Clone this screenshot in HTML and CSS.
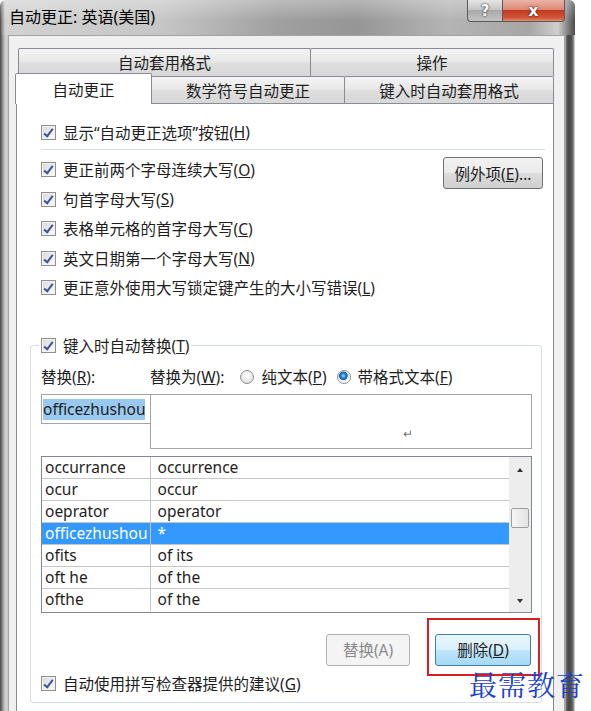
FILE: index.html
```html
<!DOCTYPE html>
<html lang="zh-CN">
<head>
    <meta charset="UTF-8">
    <meta name="viewport" content="width=device-width, initial-scale=1.0">
    <title>自动更正: 英语(美国)</title>
    <link rel="stylesheet" href="styles.css">
</head>
<body>
    <div class="window">
        <div class="titlebar">
            <span class="title">自动更正: 英语(美国)</span>
            <div class="caption">
                <span class="cap help">?</span>
                <span class="cap close">x</span>
            </div>
        </div>
        <div class="frame">
            <div class="client">
                <div class="tab-row back">
                    <div class="tab wide">自动套用格式</div>
                    <div class="tab grow">操作</div>
                </div>
                <div class="tab-row front">
                    <div class="tab active">自动更正</div>
                    <div class="tab math">数学符号自动更正</div>
                    <div class="tab grow">键入时自动套用格式</div>
                </div>
                <div class="panel">
                    <div class="top">
                        <label class="check first"><span class="cb"></span>显示“自动更正选项”按钮(<u>H</u>)</label>
                        <div class="sep"></div>
                        <div class="options">
                            <div class="opt-list">
                                <label class="check"><span class="cb"></span>更正前两个字母连续大写(<u>O</u>)</label>
                                <label class="check"><span class="cb"></span>句首字母大写(<u>S</u>)</label>
                                <label class="check"><span class="cb"></span>表格单元格的首字母大写(<u>C</u>)</label>
                                <label class="check"><span class="cb"></span>英文日期第一个字母大写(<u>N</u>)</label>
                                <label class="check"><span class="cb"></span>更正意外使用大写锁定键产生的大小写错误(<u>L</u>)</label>
                            </div>
                            <button class="btn exc">例外项(<u>E</u>)...</button>
                        </div>
                    </div>

                    <fieldset class="group">
                        <legend><label class="check"><span class="cb"></span>键入时自动替换(<u>T</u>)</label></legend>
                        <div class="labels">
                            <span class="lbl-rep">替换(<u>R</u>):</span>
                            <span>替换为(<u>W</u>):</span>
                            <span class="radio"></span><span>纯文本(<u>P</u>)</span>
                            <span class="radio on"></span><span>带格式文本(<u>F</u>)</span>
                        </div>
                        <div class="fields">
                            <div class="field rep"><span class="sel">officezhushou</span></div>
                            <div class="field with"><span class="para">↵</span></div>
                        </div>
                        <div class="list">
                            <table>
                                <tr><td>occurrance</td><td>occurrence</td></tr>
                                <tr><td>ocur</td><td>occur</td></tr>
                                <tr><td>oeprator</td><td>operator</td></tr>
                                <tr class="selected"><td>officezhushou</td><td>*</td></tr>
                                <tr><td>ofits</td><td>of its</td></tr>
                                <tr><td>oft he</td><td>of the</td></tr>
                                <tr><td>ofthe</td><td>of the</td></tr>
                            </table>
                            <div class="scrollbar">
                                <span class="arrow up"></span>
                                <span class="thumb"></span>
                                <span class="arrow down"></span>
                            </div>
                        </div>
                        <div class="actions">
                            <button class="btn replace" disabled>替换(A)</button>
                            <button class="btn hot delete">删除(<u>D</u>)</button>
                        </div>
                        <label class="check last"><span class="cb"></span>自动使用拼写检查器提供的建议(<u>G</u>)</label>
                    </fieldset>
                </div>
            </div>
        </div>
    </div>
    <div class="mark"></div>
    <div class="watermark">最需教育</div>
</body>
</html>
```

FILE: styles.css
```css
body {
    position: relative;
    margin: 0;
    background: #fff;
    font-family: "Noto Sans", "Noto Sans CJK SC", sans-serif;
    font-size: 15.5px;
    color: #1e1e1e;
}
.window {
    width: 575px;
    height: 711px;
    display: flex;
    flex-direction: column;
    overflow: hidden;
}

/* title bar */
.titlebar {
    height: 35px;
    flex-shrink: 0;
    display: flex;
    justify-content: space-between;
    padding: 0 10px 0 9px;
    border-radius: 6px 6px 0 0;
    background:
        linear-gradient(to bottom, rgba(255, 255, 255, 0.3), rgba(255, 255, 255, 0) 60%),
        linear-gradient(to right, #444 0, #8b8b8b 2px, #d2d2d2 5px, #c6c6c6 28%, #a0a0a0 48%, #969696 62%, #b4b4b4 78%, #a6a6a6 92%, #cfcfcf 97%, #4a4a4a 100%);
}
.title {
    margin-top: 7px;
    font-size: 16px;
    line-height: 20px;
    color: #000;
}
.caption {
    display: flex;
    height: 22px;
}
.cap {
    display: flex;
    align-items: center;
    justify-content: center;
    height: 22px;
    box-sizing: border-box;
    border: 1px solid #5a5a5a;
    border-top: none;
    font-family: "DejaVu Sans", sans-serif;
    font-weight: bold;
    color: #fff;
}
.help {
    width: 36px;
    border-radius: 0 0 0 4px;
    background: linear-gradient(#e6e6e6, #c6c6c6 45%, #a9a9a9 50%, #c2c2c2);
    font-size: 15px;
    text-shadow: 0 0 2px #333, 0 0 1px #333;
}
.close {
    width: 62px;
    border-left: none;
    border-radius: 0 0 4px 0;
    background: linear-gradient(#ebb3a6, #db8a76 45%, #c43a20 50%, #d2553a 85%, #e3906e);
    font-size: 16px;
    text-shadow: 0 0 2px #5a1208, 0 0 1px #5a1208;
}

/* window frame */
.frame {
    flex: 1;
    display: flex;
    padding: 0 10px 0 8px;
    background:
        linear-gradient(to right, #474747, #7d7d7d 2px, #b6b6b6 4px, #d6d6d6 6px, #c4c4c4 8px) left / 8px 100% no-repeat,
        linear-gradient(to right, #dcdcdc 0, #6a6a6a 1px, #454545 4px, #5a5a5a 7px, #9c9c9c 9px, #fff 10px) right / 10px 100% no-repeat;
}
.client {
    flex: 1;
    display: flex;
    flex-direction: column;
    background: #f0f0f0;
    border: 1px solid #a3a3a3;
    border-bottom: none;
    padding: 12px 10px 0 7px;
}

/* tabs */
.tab-row {
    display: flex;
    height: 28px;
}
.tab-row.back {
    margin-left: 2px;
}
.tab-row.front {
    height: 27px;
    align-items: flex-start;
}
.tab {
    height: 100%;
    box-sizing: border-box;
    display: flex;
    align-items: center;
    justify-content: center;
    border: 1px solid #898c95;
    border-bottom: none;
    border-radius: 2px 2px 0 0;
    background: linear-gradient(#f4f4f4, #e8e8e8 45%, #dddddd 55%, #d8d8d8);
    color: #1e1e1e;
}
.tab + .tab {
    margin-left: -1px;
}
.wide {
    width: 293px;
}
.grow {
    flex: 1;
}
.active {
    position: relative;
    z-index: 1;
    width: 137px;
    height: 31px;
    margin: -3px 0 0 -1px;
    background: #fff;
}
.math {
    width: 194px;
}

/* main panel */
.panel {
    flex: 1;
    background: #fff;
    border: 1px solid #898c95;
    border-bottom: none;
    padding: 0 11px 0 13px;
}
.top {
    padding-left: 11px;
    margin-right: -3px;
}
.check {
    display: flex;
    align-items: center;
    height: 20px;
    white-space: nowrap;
}
.cb {
    position: relative;
    width: 15px;
    height: 15px;
    flex-shrink: 0;
    box-sizing: border-box;
    margin-right: 7px;
    border: 1px solid #8e8f8f;
    background: linear-gradient(135deg, #d9d9d9, #fbfbfb);
    box-shadow: inset 0 0 0 1px #f2f2f2;
}
.cb::after {
    content: "";
    position: absolute;
    left: 4px;
    top: 1px;
    width: 3px;
    height: 8px;
    border: solid #3d5499;
    border-width: 0 2px 2px 0;
    transform: rotate(38deg);
}
.first {
    margin-top: 18px;
}
.sep {
    height: 1px;
    margin-top: 7px;
    background: #d5dfe5;
}
.options {
    display: flex;
    justify-content: space-between;
    align-items: flex-start;
    margin-top: 5px;
}
.opt-list .check {
    height: 29.5px;
}
.btn {
    height: 32px;
    box-sizing: border-box;
    border: 1px solid #707070;
    border-radius: 3px;
    background: linear-gradient(#f2f2f2, #ebebeb 49%, #dddddd 50%, #cfcfcf);
    font-family: inherit;
    font-size: 15.5px;
    color: #1e1e1e;
    padding: 0;
}
.exc {
    width: 100px;
    margin: 2px 2px 0 0;
}
.btn:disabled {
    border-color: #adb2b5;
    background: #f4f4f4;
    color: #8a8a8a;
}
.btn.hot {
    border-color: #3c7fb1;
    background: linear-gradient(#eaf6fd, #d9f0fc 49%, #bee6fd 50%, #a7d9f5);
}

/* replace group */
.group {
    margin: 33px 0 0;
    padding: 0 9px 8px 10px;
    border: 1px solid #d5dfe5;
    border-radius: 3px;
    min-width: 0;
}
.group legend {
    padding: 0 2px;
    margin-left: -2px;
}
.labels {
    display: flex;
    align-items: center;
    height: 20px;
    margin-top: 11px;
    white-space: nowrap;
}
.lbl-rep {
    width: 109px;
}
.radio {
    width: 14px;
    height: 14px;
    box-sizing: border-box;
    border-radius: 50%;
    border: 1px solid #8e8f8f;
    background: radial-gradient(circle at 50% 40%, #fff, #d8d8d8);
    margin: 0 7px 0 16px;
}
.radio.on {
    margin-left: 10px;
    background: radial-gradient(circle at 45% 40%, #a6e4ff 0, #2a8ee0 2px, #0e5aa6 4px, #e6e6e6 4.5px, #fff 7px);
}
.fields {
    display: flex;
    margin-top: 7px;
}
.field {
    box-sizing: border-box;
    border: 1px solid #a3a3a3;
    background: #fff;
}
.rep {
    width: 110px;
    height: 30px;
    padding: 3px 0 0 1px;
    overflow: hidden;
    white-space: nowrap;
}
.sel {
    display: inline-block;
    background: #99c9ef;
    line-height: 21px;
    color: #1e1e1e;
}
.with {
    flex: 1;
    height: 55px;
    margin-left: -1px;
    padding: 26px 0 0 252px;
}
.para {
    font-size: 12px;
    color: #777;
}

/* list */
.list {
    display: flex;
    height: 157px;
    margin-top: 7px;
    box-sizing: border-box;
    border: 1px solid #828790;
}
.list table {
    flex: 1;
    align-self: flex-start;
    border-collapse: collapse;
    table-layout: fixed;
}
.list td {
    height: 22px;
    box-sizing: border-box;
    padding: 0 0 0 7px;
    border-bottom: 1px solid #c6c6c6;
    white-space: nowrap;
    overflow: hidden;
    line-height: 21px;
}
.list td:first-child {
    width: 108px;
    padding-left: 3px;
    border-right: 1px solid #c6c6c6;
}
.list tr:last-child td {
    border-bottom: none;
}
.list tr.selected td {
    background: #3399ff;
    color: #fff;
}
.scrollbar {
    width: 22px;
    display: flex;
    flex-direction: column;
    align-items: center;
    background: #ededed;
}
.arrow {
    width: 0;
    height: 0;
    border-left: 3.5px solid transparent;
    border-right: 3.5px solid transparent;
}
.arrow.up {
    margin-top: 11px;
    border-bottom: 4px solid #333;
}
.arrow.down {
    margin: auto 0 9px;
    border-top: 4px solid #333;
}
.thumb {
    width: 18px;
    height: 20px;
    margin-top: 36px;
    box-sizing: border-box;
    border: 1px solid #9e9e9e;
    border-radius: 2px;
    background: linear-gradient(to right, #f6f6f6, #e2e2e2);
}

.actions {
    display: flex;
    justify-content: flex-end;
    gap: 25px;
    margin-top: 21px;
    padding-right: 1px;
}
.replace {
    width: 84px;
}
.delete {
    width: 96px;
}
.last {
    margin-top: 8px;
}

/* annotations over the screenshot */
.mark {
    position: absolute;
    left: 427px;
    top: 618px;
    width: 113px;
    height: 58px;
    box-sizing: border-box;
    border: 2px solid #d81e1e;
}
.watermark {
    position: absolute;
    left: 469px;
    top: 666px;
    white-space: nowrap;
    font-family: "Noto Serif CJK SC", "Noto Sans CJK SC", serif;
    font-size: 28px;
    line-height: 36px;
    letter-spacing: 1px;
    color: #1d3fd1;
}
```
